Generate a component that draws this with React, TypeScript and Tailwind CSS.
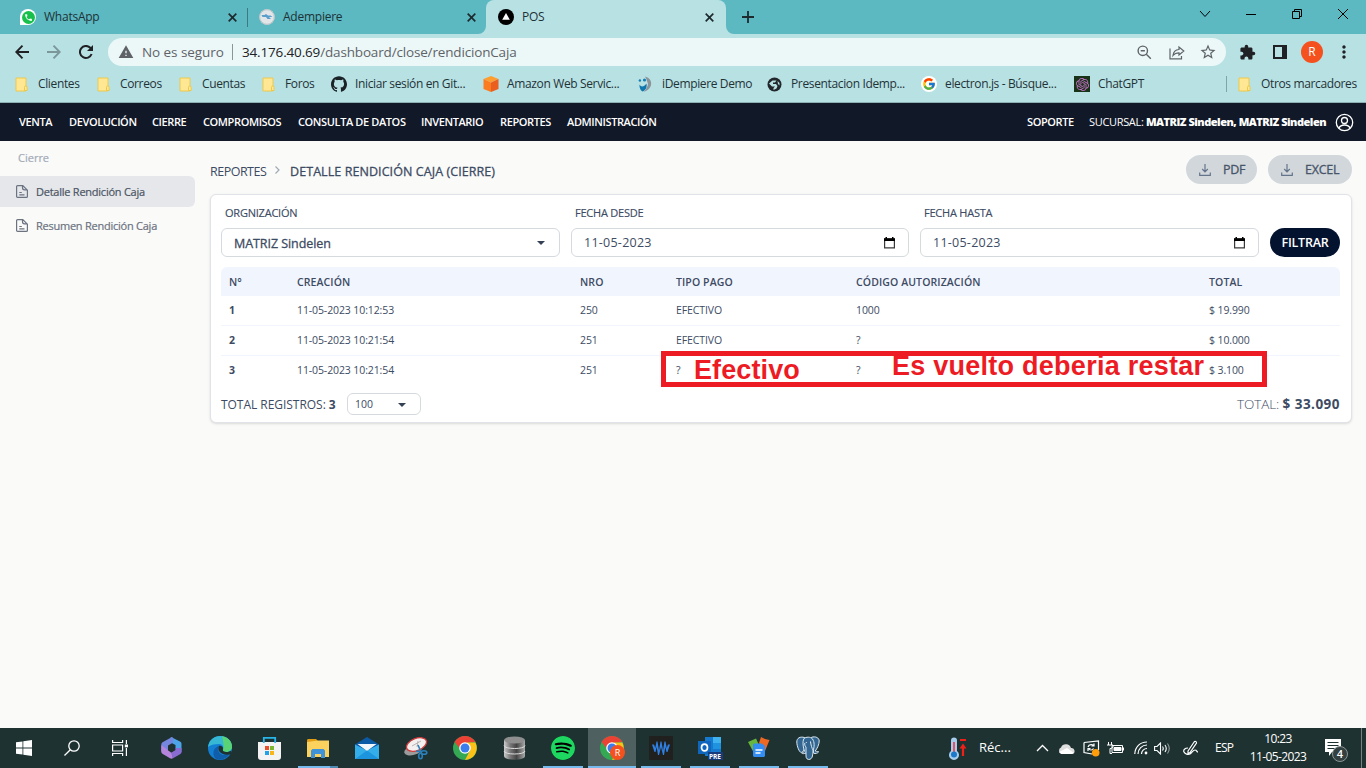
import type { ReactNode } from 'react';
import { FcGoogle } from 'react-icons/fc';
import { SiGithub, SiOpenai, SiSpotify } from 'react-icons/si';
import { MdWarning, MdStarBorder, MdExtension, MdMoreVert, MdPhone } from 'react-icons/md';

/* ---------- browser ---------- */

function Folder() {
  return (
    <svg className="ml-px" width="13" height="15" viewBox="0 0 13 15">
      <path d="M1 1h10v13H1z" fill="#ffe793" stroke="#ecc94b" />
      <path d="M9.500 13.500v-3.200a1 1 0 0 1 2.600 0v3.200z" fill="#ffe793" stroke="#ecc94b" />
    </svg>
  );
}

function BoxIcon() {
  return (
    <svg width="16" height="16" viewBox="0 0 16 16">
      <path d="M8 0l7.500 3L8 6.500.5 3z" fill="#ff9d2e" />
      <path d="M.5 3L8 6.500V16L.5 13z" fill="#fb7b21" />
      <path d="M15.500 3L8 6.500V16l7.500-3z" fill="#ea5f1d" />
    </svg>
  );
}

function DempiereIcon() {
  return (
    <svg width="14" height="16" viewBox="0 0 14 16">
      <path d="M7 .5c5 1 7.500 5.500 5.500 10C11.500 13 9 15 5.500 15.800 9 12.500 10.300 9.500 9.500 6.500 9 4.300 8 2.300 7 .5z" fill="#8b9499" />
      <path d="M9 6c1 3 0 6.500-3.500 9.800 2-3.500 3.200-6.500 3.500-9.800z" fill="#e8eef0" />
      <path d="M1.500 8.500c1.500 3 4.500 2.500 7-1 .8 4-.5 6.500-4 8-2-1-3.300-4-3-7z" fill="#1277ad" />
      <circle cx="6.500" cy="4" r="1.600" fill="#1680b4" />
      <circle cx="1.900" cy="4.500" r="1.200" fill="#1680b4" />
    </svg>
  );
}

function GlobeIcon() {
  return (
    <svg width="15" height="15" viewBox="0 0 15 15">
      <circle cx="7.500" cy="7.500" r="7" fill="#23272b" />
      <path d="M5.500 3.500h4L8 5.500H6V7h3l1.500 2-1 2.500-3 1.500V11L8 9.500H5L2 6.500z" fill="#b8e1e4" />
      <path d="M10.500 4l2 2v2.500L11 7z" fill="#b8e1e4" />
    </svg>
  );
}

function Tab({ icon, title, active, divider }: { icon: ReactNode; title: string; active?: boolean; divider?: boolean }) {
  return (
    <div className={`relative flex h-[34px] items-center pl-3 ${active ? 'w-60 rounded-t-lg bg-[#b8e1e4] pr-3' : 'w-[239px] pr-[10px]'}`}>
      {active && (
        <>
          <svg className="absolute -left-2 bottom-0" width="8" height="8"><path d="M8 0v8H0a8 8 0 0 0 8-8z" fill="#b8e1e4" /></svg>
          <svg className="absolute -right-2 bottom-0" width="8" height="8"><path d="M0 0v8h8a8 8 0 0 1-8-8z" fill="#b8e1e4" /></svg>
        </>
      )}
      <span className="flex w-6 shrink-0">{icon}</span>
      <span className="flex-1 text-[12px] tracking-[-0.02em] text-[#1d3236]">{title}</span>
      <svg width="9" height="9" viewBox="0 0 9 9" stroke="#1d2b2e" strokeWidth="1.700"><path d="M.7.7l7.600 7.600M8.300.7L.7 8.300" /></svg>
      {divider && <span className="absolute -right-px top-2 h-[19px] w-px bg-[#3c7a81]" />}
    </div>
  );
}

function Bookmark({ icon, label, width }: { icon: ReactNode; label: string; width: string }) {
  return (
    <div className={`flex shrink-0 items-center ${width}`}>
      <span className="flex w-6 shrink-0">{icon}</span>
      <span>{label}</span>
    </div>
  );
}

function Browser() {
  return (
    <header className="shrink-0">
      <div className="flex h-[34px] bg-[#5cb8c1]">
        <div className="flex w-[726px] pl-2">
          <Tab
            divider
            title="WhatsApp"
            icon={<span className="flex size-4 items-center justify-center rounded-full rounded-bl-sm bg-white"><span className="flex size-[13px] items-center justify-center rounded-full bg-[#17c04a]"><MdPhone className="size-[9px] text-white" /></span></span>}
          />
          <Tab
            title="Adempiere"
            icon={
              <svg width="16" height="16" viewBox="0 0 16 16">
                <circle cx="8" cy="8" r="7.700" fill="#e3e6e9" />
                <circle cx="8" cy="8" r="7.300" fill="none" stroke="#bcc3c7" />
                <path d="M2.500 6h3l1.500-1 2 1.500h2.500l2 1.500H10l2 2H8.500L7 8H3.500z" fill="#5a9fcb" />
              </svg>
            }
          />
          <Tab
            active
            title="POS"
            icon={<svg width="16" height="16" viewBox="0 0 16 16"><circle cx="8" cy="8" r="8" fill="#000" /><path d="M8 4l3.800 6.800H4.200z" fill="#fff" /></svg>}
          />
        </div>
        <div className="flex flex-1 items-center pl-4"><svg width="12" height="12" viewBox="0 0 12 12" stroke="#1d2b2e" strokeWidth="1.800"><path d="M6 0v12M0 6h12" /></svg></div>
        <div className="flex h-7 items-center text-black">
          <svg className="mr-[35px]" width="12" height="8" viewBox="0 0 12 8" fill="none" stroke="currentColor"><path d="M1 1l5 5.500L11 1" /></svg>
          <svg className="mr-9" width="10" height="10" viewBox="0 0 10 10" stroke="currentColor"><path d="M0 5.500h10" /></svg>
          <svg className="mr-9" width="10" height="10" viewBox="0 0 10 10" fill="none" stroke="currentColor"><path d="M.5 2.500h7v7h-7zM2.500 2.500v-2h7v7h-2" /></svg>
          <svg className="mr-[18px]" width="10" height="10" viewBox="0 0 10 10" stroke="currentColor"><path d="M0 0l10 10M10 0L0 10" /></svg>
        </div>
      </div>
      <div className="flex h-9 items-center bg-[#b8e1e4] text-[#202124]">
        <svg className="ml-[15px]" width="14" height="14" viewBox="0 0 14 14" fill="none" stroke="currentColor" strokeWidth="1.900"><path d="M14 7H1.500M7.500.7L1.300 7l6.200 6.300" /></svg>
        <svg className="ml-[18px]" width="14" height="14" viewBox="0 0 14 14" fill="none" stroke="#7b979a" strokeWidth="1.900"><path d="M0 7h12.500M6.500.7L12.700 7l-6.200 6.300" /></svg>
        <svg className="ml-[18px]" width="14" height="14" viewBox="0 0 14 14" fill="none" stroke="currentColor" strokeWidth="2"><path d="M12.600 9A6 6 0 1 1 11.300 2.800L13 4.500" /><path d="M14 0v6H8z" fill="currentColor" stroke="none" /></svg>
        <div className="ml-[15px] flex h-7 w-[1118px] items-center rounded-full bg-[#ecf8f8] pl-[10px] text-[13.5px] text-[#5f6368]">
          <MdWarning className="size-4" />
          <span className="ml-2 w-[90px] tracking-[-0.005em]">No es seguro</span>
          <span className="h-4 w-px bg-[#8b9496]" />
          <span className="ml-[9px] flex-1 tracking-[-0.012em]"><span className="text-[#202124]">34.176.40.69</span>/dashboard/close/rendicionCaja</span>
          <svg width="15" height="15" viewBox="0 0 15 15" fill="none" stroke="currentColor" strokeWidth="1.400"><circle cx="5.800" cy="5.800" r="4.700" /><path d="M9.300 9.300l4.500 4.500M3.700 5.800h4.200" /></svg>
          <svg className="ml-[17px]" width="16" height="15" viewBox="0 0 16 15" fill="none" stroke="currentColor" strokeWidth="1.200"><path d="M1 3.500v10.300h11.500V11M4 10.500c.5-4 2.500-5.800 6-6V2l4.800 4-4.800 4V7.800c-2.800 0-4.500.8-6 2.700z" /></svg>
          <MdStarBorder className="ml-[14px] mr-[9px] size-[18px]" />
        </div>
        <MdExtension className="ml-[13px] size-[17px]" />
        <span className="ml-[17px] h-[14px] w-[14px] border-2 border-r-[5px] border-[#202124]" />
        <span className="ml-[14px] flex size-[22px] items-center justify-center rounded-full bg-[#f4511e] text-[12px] text-white">R</span>
        <MdMoreVert className="ml-[11px] size-[20px]" />
      </div>
      <div className="flex h-8 items-center bg-[#b8e1e4] pb-1 pl-[14px] text-[12px] tracking-[-0.03em] text-[#1f3337]">
        <Bookmark width="w-[82px]" icon={<Folder />} label="Clientes" />
        <Bookmark width="w-[82px]" icon={<Folder />} label="Correos" />
        <Bookmark width="w-[83px]" icon={<Folder />} label="Cuentas" />
        <Bookmark width="w-[70px]" icon={<Folder />} label="Foros" />
        <Bookmark width="w-[152px]" icon={<SiGithub className="size-4 text-[#1b2225]" />} label="Iniciar sesión en Git..." />
        <Bookmark width="w-[155px]" icon={<BoxIcon />} label="Amazon Web Servic..." />
        <Bookmark width="w-[129px]" icon={<DempiereIcon />} label="iDempiere Demo" />
        <Bookmark width="w-[154px]" icon={<GlobeIcon />} label="Presentacion Idemp..." />
        <Bookmark width="w-[153px]" icon={<span className="flex size-4 items-center justify-center rounded-full bg-white"><FcGoogle className="size-[14px]" /></span>} label="electron.js - Búsque..." />
        <Bookmark width="w-[152px]" icon={<span className="flex size-4 items-center justify-center bg-[#193319]"><SiOpenai className="size-[13px] text-[#c56fc9]" /></span>} label="ChatGPT" />
        <span className="mr-[10px] h-4 w-px bg-[#7fa5a9]" />
        <Bookmark width="w-[120px]" icon={<Folder />} label="Otros marcadores" />
      </div>
      <div className="h-px bg-[#8fb0b3]" />
    </header>
  );
}

/* ---------- application ---------- */

const menu = [
  ['VENTA', 'w-[50px]'],
  ['DEVOLUCIÓN', 'w-[83px]'],
  ['CIERRE', 'w-[51px]'],
  ['COMPROMISOS', 'w-[95px]'],
  ['CONSULTA DE DATOS', 'w-[123px]'],
  ['INVENTARIO', 'w-[79px]'],
  ['REPORTES', 'w-[67px]'],
  ['ADMINISTRACIÓN', 'w-[100px]'],
];

function NavBar() {
  return (
    <nav className="flex h-[38px] shrink-0 items-center bg-[#111827] pl-[19px] text-[11px] font-semibold tracking-[-0.035em] text-white">
      {menu.map(([label, width]) => <span key={label} className={`shrink-0 ${width}`}>{label}</span>)}
      <span className="ml-auto w-[62px]">SOPORTE</span>
      <span className="w-[246px]"><span className="font-normal tracking-[-0.03em]">SUCURSAL:</span> <b className="tracking-[-0.045em]">MATRIZ Sindelen, MATRIZ Sindelen</b></span>
      <svg className="mr-3" width="19" height="19" viewBox="0 0 19 19" fill="none" stroke="#fff" strokeWidth="1.300">
        <circle cx="9.500" cy="9.500" r="8.200" />
        <circle cx="9.500" cy="7.500" r="3" />
        <path d="M4 15.300c.8-2.200 3-3.300 5.500-3.300s4.700 1.100 5.500 3.300" />
      </svg>
    </nav>
  );
}

function DocIcon() {
  return (
    <svg className="mr-[8px]" width="12" height="13" viewBox="0 0 12 13" fill="none" stroke="#6b7280" strokeWidth="1.200">
      <path d="M1.600.6h5.200l4.600 4.600v6.200a1 1 0 0 1-1 1H1.600a1 1 0 0 1-1-1V1.600a1 1 0 0 1 1-1zM6.500.8v2a2 2 0 0 0 2 2h2.700M3.300 7.500h2.500M3.300 9.800h5.200" />
    </svg>
  );
}

function SideBar() {
  return (
    <aside className="w-[195px] shrink-0 text-[11px] tracking-[-0.022em] [-webkit-text-stroke:0.2px]">
      <div className="flex h-[35px] items-center pl-[18px] tracking-normal text-[#a3abb8]">Cierre</div>
      <div className="flex h-[31px] items-center rounded-r-md bg-[#e5e7eb] pl-4 text-[#4b5563]"><DocIcon /><span className="pt-0.5">Detalle Rendición Caja</span></div>
      <div className="mt-[3px] flex h-[31px] items-center pl-4 text-[#6b7280]"><DocIcon /><span className="pt-0.5">Resumen Rendición Caja</span></div>
    </aside>
  );
}

function DownloadButton({ label, width }: { label: string; width: string }) {
  return (
    <button className={`flex h-[29px] items-center rounded-full bg-[#d2d7db] pl-[13px] text-[12.5px] tracking-[-0.02em] text-[#475569] [-webkit-text-stroke:0.3px] ${width}`}>
      <svg className="mr-3" width="12" height="12" viewBox="0 0 12 12" fill="none" stroke="#64748b" strokeWidth="1.200">
        <path d="M6 0v7.500M3.200 5L6 7.800 8.800 5M.7 8.500v2.800h10.600V8.500" />
      </svg>
      <span className="pt-0.5">{label}</span>
    </button>
  );
}

function Caret() {
  return <svg width="8" height="4" viewBox="0 0 8 4"><path d="M0 0h8L4 4z" fill="#334155" /></svg>;
}

function DateField({ label, width }: { label: string; width: string }) {
  return (
    <div className={width}>
      <div className="flex h-[18px] items-center pl-1 [-webkit-text-stroke:0.15px]">{label}</div>
      <div className="mt-[6px] flex h-[29px] items-center justify-between rounded-md border border-[#d5dade] pl-3 pr-[13px] text-[12.5px]">
        <span className="pt-px tracking-[0.02em]">11-05-2023</span>
        <svg width="11" height="12" viewBox="0 0 11 12">
          <path d="M.6 2h9.800v8.900H.6z" fill="none" stroke="#3a3a3a" strokeWidth="1.200" />
          <path d="M0 1.300h11V4H0zM1.500 0H3v2H1.500zM8 0h1.500v2H8z" fill="#000" />
        </svg>
      </div>
    </div>
  );
}

const rows = [
  ['1', '11-05-2023 10:12:53', '250', 'EFECTIVO', '1000', '$ 19.990'],
  ['2', '11-05-2023 10:21:54', '251', 'EFECTIVO', '?', '$ 10.000'],
  ['3', '11-05-2023 10:21:54', '251', '?', '?', '$ 3.100'],
];

const columns = 'grid grid-cols-[68px_283px_96px_180px_353px_1fr] items-center pl-2';

function Report() {
  return (
    <main className="relative flex-1 pl-[15px] pr-[14px] pt-[14px] text-[#3d4b63]">
      <div className="flex h-[29px] items-center text-[12.5px]">
        <span className="w-[65px] pt-[5px] tracking-[-0.04em]">REPORTES</span>
        <svg className="mr-[10px]" width="5" height="8" viewBox="0 0 5 8" fill="none" stroke="#a1a9b5" strokeWidth="1.200"><path d="M.5.5L4 4 .5 7.500" /></svg>
        <span className="flex-1 pt-[5px] tracking-[0.006em] [-webkit-text-stroke:0.3px]">DETALLE RENDICIÓN CAJA (CIERRE)</span>
        <DownloadButton label="PDF" width="w-[71px]" />
        <span className="w-[11px]" />
        <DownloadButton label="EXCEL" width="w-[84px]" />
      </div>

      <section className="mt-[10px] h-[229px] rounded-md border border-[#e0e3e7] bg-white pl-[10px] pr-[11px] pt-[9px] shadow-sm">
        <div className="flex gap-[11px] text-[11px] tracking-[-0.02em]">
          <div className="w-[339px]">
            <div className="flex h-[18px] items-center pl-1 [-webkit-text-stroke:0.15px]">ORGNIZACIÓN</div>
            <div className="mt-[6px] flex h-[29px] items-center justify-between rounded-md border border-[#d5dade] pl-3 pr-[14px] text-[12.5px]">
              <span className="pt-1 tracking-[-0.005em] [-webkit-text-stroke:0.3px]">MATRIZ Sindelen</span><Caret />
            </div>
          </div>
          <DateField label="FECHA DESDE" width="w-[338px]" />
          <DateField label="FECHA HASTA" width="w-[339px]" />
          <button className="mt-6 h-[29px] w-[70px] rounded-full bg-[#03122f] pt-0.5 text-[12.5px] font-semibold tracking-[-0.02em] text-white">FILTRAR</button>
        </div>

        <div className="mt-[10px] text-[10.5px]">
          <div className={`h-[29px] rounded-t-md bg-[#f1f5fe] pt-0.5 font-semibold tracking-[0.01em] ${columns}`}>
            {['N°', 'CREACIÓN', 'NRO', 'TIPO PAGO', 'CÓDIGO AUTORIZACIÓN', 'TOTAL'].map((h) => <span key={h}>{h}</span>)}
          </div>
          {rows.map((row, i) => (
            <div key={row[0]} className={`h-[30px] tracking-[-0.01em] ${i < 2 ? 'border-b border-[#f1f5fe]' : ''} ${columns}`}>
              {row.map((cell, c) => <span key={c} className={c === 0 ? 'font-bold' : ''}>{cell}</span>)}
            </div>
          ))}
        </div>

        <div className="mt-[6px] flex h-[23px] items-center text-[12px]">
          <span className="w-[126px] pt-0.5 tracking-[-0.003em]">TOTAL REGISTROS: <b>3</b></span>
          <div className="flex h-[22px] w-[74px] items-center justify-between rounded-md border border-[#d5dade] pl-[7px] pr-[14px] pt-[3px] text-[10.5px]"><span>100</span><Caret /></div>
          <span className="ml-auto pt-0.5 text-[13.5px]"><span className="font-light tracking-[-0.01em]">TOTAL:</span> <b className="tracking-[0.035em]">$ 33.090</b></span>
        </div>
      </section>

      <div className="absolute left-[466px] top-[210px] h-9 w-[606px] border-[5px] border-[#ed1c24]" />
      <div className="absolute left-[499px] top-[214px] font-['Liberation_Sans',sans-serif] text-[27px] font-bold leading-[30px] tracking-[0.004em] text-[#ed1c24]">Efectivo</div>
      <div className="absolute left-[697px] top-[210px] whitespace-nowrap font-['Liberation_Sans',sans-serif] text-[27px] font-bold leading-[30px] tracking-[0.0095em] text-[#ed1c24]">Es vuelto deberia restar</div>
    </main>
  );
}

/* ---------- taskbar ---------- */

function Chrome() {
  return (
    <svg width="24" height="24" viewBox="0 0 24 24">
      <circle cx="12" cy="12" r="12" fill="#34a853" />
      <path d="M1.600 6A12 12 0 0 1 22.400 6L12 7 8 14z" fill="#ea4335" />
      <path d="M22.400 6.500A12 12 0 0 1 12 24l5-9.500L14 6.500z" fill="#fbc116" />
      <circle cx="12" cy="12" r="5.800" fill="#fff" />
      <circle cx="12" cy="12" r="4.500" fill="#3b7ded" />
    </svg>
  );
}

function Office() {
  return (
    <svg width="21" height="22" viewBox="0 0 21 22">
      <path d="M10 0l9 4.500c1 .6 1.500 1.500 1.500 2.500v8l-6-3.500V8L8 4.500z" fill="#4ca5e8" />
      <path d="M11 0L2 5C.8 5.700.3 6.500.3 7.500v7L7 14V8.500l4-2.300c2-1 2-5 0-6.200z" fill="#7486dd" />
      <path d="M.3 8v6.500c0 1.200.5 1.900 1.500 2.500L9 21.300c1 .6 2 .4 3 0l-1-5-4-3z" fill="#b585de" />
      <path d="M20.500 11v4c0 1-.5 1.600-1.500 2.200l-7 4.100-2-5.500 3-1.800c1-.6 1.500-1 1.500-2V11z" fill="#8a6bd2" />
      <path d="M10.500 7.800l3.300 1.900v3.400l-3.300 1.900-3.300-1.900V9.700z" fill="#1f3232" />
    </svg>
  );
}

function Edge() {
  return (
    <svg width="24" height="24" viewBox="0 0 24 24">
      <circle cx="12" cy="12" r="12" fill="#137fd3" />
      <path d="M0 11C1 4 6 0 12 0c7 0 12 5 12 10.500 0 4-3 5.500-6 5.500-2 0-3.500-.8-3-2 1.500-3-.8-6-4-6-5 0-9 1-11 3z" fill="#36b8d5" />
      <path d="M14 .2C20 1 24 5.500 24 10.500c0 4-3 5.500-6 5.500-2 0-3.500-.8-3-2 1.500-4 0-9-1-13.800z" fill="#58d477" />
      <path d="M8 23C3 18 6 11 11 10c-2 4 0 9 5 9 2.500 0 4.500-.5 6-1.500C19 22 14 25 8 23z" fill="#105da9" />
      <path d="M11 10c2-.6 4.600 1 4 3-.7 1.500 0 2.700 3 3 2 .2 3.700-.5 4.800-1.200L24 18c-6 2.500-16-1-13-8z" fill="#1f3232" />
    </svg>
  );
}

function Store() {
  return (
    <svg width="23" height="23" viewBox="0 0 23 23">
      <path d="M0 5h23v15a3 3 0 0 1-3 3H3a3 3 0 0 1-3-3z" fill="#f3f3f3" />
      <path d="M5.800 6V.9h11.400V6" fill="none" stroke="#28b5e8" strokeWidth="1.800" />
      <path d="M7 9h4v4H7z" fill="#e6502b" /><path d="M12 9h4v4h-4z" fill="#7cb82f" /><path d="M7 14h4v4H7z" fill="#22a2e9" /><path d="M12 14h4v4h-4z" fill="#f8b617" />
    </svg>
  );
}

function Explorer() {
  return (
    <svg width="22" height="19" viewBox="0 0 22 19">
      <path d="M0 1.500C0 .5.500 0 1.500 0H9l1.500 1.500V4H0z" fill="#e29d12" />
      <path d="M0 3l11-1.500h11V18H0z" fill="#fbd25d" />
      <path d="M4 19v-7.500L5.500 10h11l1.500 1.500V19h-4v-4H8v4z" fill="#3f93d9" />
    </svg>
  );
}

function Mail() {
  return (
    <svg width="24" height="22" viewBox="0 0 24 22">
      <path d="M0 7.500L12 0l12 7.500V12H0z" fill="#0a5aa6" />
      <path d="M0 7.500l12 6 12-6V22H0z" fill="#34aeeb" />
      <path d="M2.500 7h19L12 14z" fill="#f1f6fa" />
      <path d="M0 22l12-8.500L24 22z" fill="#1c94de" />
    </svg>
  );
}

function Snip() {
  return (
    <svg width="24" height="23" viewBox="0 0 24 23">
      <ellipse cx="9" cy="13.500" rx="9" ry="4.500" fill="#9c9c9c" transform="rotate(-15 9 13.500)" />
      <ellipse cx="12.500" cy="7.500" rx="10.500" ry="6" fill="#f4f0f0" stroke="#d23b3b" strokeWidth="1.300" transform="rotate(-22 12.500 7.500)" />
      <path d="M8 9l9-5M13 10l1-6" stroke="#b9b2b2" />
      <g fill="none" stroke="#2a80bb" strokeWidth="1.600"><path d="M14 8l3 7M12 14l6 1" /><ellipse cx="20" cy="15.500" rx="2.800" ry="1.800" /><ellipse cx="16.500" cy="19" rx="1.800" ry="2.800" /></g>
    </svg>
  );
}

function Database() {
  return (
    <svg width="23" height="24" viewBox="0 0 23 24">
      <defs><linearGradient id="steel"><stop offset="0" stopColor="#ccc" /><stop offset=".3" stopColor="#777" /><stop offset=".6" stopColor="#444" /><stop offset="1" stopColor="#aaa" /></linearGradient></defs>
      <path d="M1 4v16c0 5 21 5 21 0V4z" fill="url(#steel)" />
      <ellipse cx="11.500" cy="4" rx="10.500" ry="3.500" fill="#8f8f8f" />
      <path d="M1 9.500c0 4 21 4 21 0M1 15c0 4 21 4 21 0" fill="none" stroke="#ddd" strokeWidth="1" />
    </svg>
  );
}

function Wave() {
  return (
    <svg width="24" height="24" viewBox="0 0 24 24">
      <path d="M0 0h24v24H0z" fill="#20201f" />
      <path d="M3 8.500h2l1.300 3.500 1.200-6.500h1l1.500 9 1.500-9h1l1.500 9 1.500-9h1l1.200 6.500L19 8.500h2L18.500 16h-1L16.300 11 15 19h-1l-2-8-2 8H9l-1.300-8L6.500 16h-1z" fill="#2f80e4" />
    </svg>
  );
}

function Outlook() {
  return (
    <svg width="25" height="24" viewBox="0 0 25 24">
      <path d="M7 1h16v19H7z" fill="#1479cf" /><path d="M15 1h8v6h-8z" fill="#3fb1ee" /><path d="M15 7h8v6h-8z" fill="#1f93e0" />
      <path d="M0 5h13v13H0z" fill="#0f66bd" />
      <ellipse cx="6.500" cy="11.500" rx="3" ry="3.400" fill="none" stroke="#fff" strokeWidth="1.700" />
      <path d="M10 16h15v8H10z" fill="#173a78" />
      <text x="11" y="22.500" fill="#fff" fontSize="6.500" fontWeight="700">PRE</text>
    </svg>
  );
}

function Documents() {
  return (
    <svg width="22" height="22" viewBox="0 0 22 22">
      <path d="M0 5l8-3.500L11 8l-5 8z" fill="#66b63d" /><path d="M13 0l4 2 4.500 1-4.500 11-6-8z" fill="#ee6823" />
      <path d="M5 7.500l1-1h8l3 2.500v10l-1 1H6l-1-1z" fill="#338df2" /><path d="M7.500 13h7M7.500 16h5" stroke="#fff" strokeWidth="1.400" />
    </svg>
  );
}

function Elephant() {
  return (
    <svg width="24" height="24" viewBox="0 0 24 24" fill="#336791" stroke="#dce8f0" strokeWidth="1" strokeLinejoin="round">
      <path d="M8.500 1.500C4 .3.800 2 .8 6c0 4 2.500 10.500 4.500 10.500 1 0 1.800-1.500 2.700-2.700z" />
      <path d="M15.500 1.300c4-1.300 7.700.5 7.700 3.700 0 3.500-2 7.500-4 10 2 .8 3 .3 3.500.8-1 1.500-3.500 2-5 1.500z" />
      <path d="M8 2.500c2-1.700 6.500-2 8.500.5 2.200 3 2 8 .5 12-.5 3.500 0 7-3 8.300-2.500.7-4-.8-4-3.300v-3c-1.500.8-3.500.8-4.200.2 1-.9 2-.7 2.700-2.200C7.500 12.500 6 6 8 2.500z" />
      <path d="M10 17V11c-1.200-1-1.500-2.500-1.200-4M14.500 5.500c.5 3.500 1 6 3 9.500" fill="none" />
      <path d="M9.800 6.500h1M14 6.300h1" />
    </svg>
  );
}

const apps: { name: string; icon: ReactNode; open?: boolean; active?: boolean }[] = [
  { name: 'office', icon: <Office /> },
  { name: 'edge', icon: <Edge /> },
  { name: 'store', icon: <Store /> },
  { name: 'explorer', icon: <Explorer />, open: true },
  { name: 'mail', icon: <Mail /> },
  { name: 'snip', icon: <Snip /> },
  { name: 'chrome', icon: <Chrome /> },
  { name: 'database', icon: <Database /> },
  { name: 'spotify', icon: <span className="rounded-full bg-black"><SiSpotify className="size-6 text-[#1ed760]" /></span>, open: true },
  {
    name: 'chrome-profile',
    active: true,
    icon: (
      <span className="relative">
        <Chrome />
        <span className="absolute left-[10px] top-[9px] flex size-[15px] items-center justify-center rounded-full bg-[#f4511e] text-[9px] text-white">R</span>
      </span>
    ),
  },
  { name: 'wave', icon: <Wave />, open: true },
  { name: 'outlook', icon: <Outlook />, open: true },
  { name: 'documents', icon: <Documents />, open: true },
  { name: 'postgres', icon: <Elephant />, open: true },
];

function Taskbar() {
  return (
    <footer className="flex h-10 shrink-0 items-center bg-[#1f3232] text-white">
      <div className="flex w-[147px]">
        <span className="flex w-12 justify-center">
          <svg width="16" height="16" viewBox="0 0 16 16" fill="#fff"><path d="M0 2.300L6.500 1.400V7.600H0zM7.300 1.300L16 0v7.600H7.300zM0 8.400h6.500v6.200L0 13.700zM7.300 8.400H16V16l-8.700-1.300z" /></svg>
        </span>
        <span className="flex w-12 justify-center">
          <svg width="16" height="16" viewBox="0 0 16 16" fill="none" stroke="#fff" strokeWidth="1.300"><circle cx="10" cy="6" r="5.200" /><path d="M6.300 9.700L.5 15.500" /></svg>
        </span>
        <span className="flex w-12 justify-center">
          <svg width="16" height="16" viewBox="0 0 16 16" fill="none" stroke="#fff" strokeWidth="1.200"><path d="M.6 0v2.500h10V0M.6 5h10v6H.6zM.6 16v-2.500h10V16M14.400 0v4M14.400 8v8" /><path d="M12.800 4.500H16v2.800h-3.200z" fill="#fff" stroke="none" /></svg>
        </span>
      </div>
      {apps.map((app) => (
        <div key={app.name} className="flex w-[49px] shrink-0 justify-start">
          <div className={`relative flex h-10 w-12 items-center justify-center ${app.active ? 'bg-[#4e6060]' : ''}`}>
            {app.icon}
            {app.open && <span className="absolute bottom-0 left-1 h-0.5 w-10 bg-[#76b9ed]" />}
            {app.active && <span className="absolute bottom-0 left-0 h-0.5 w-12 bg-[#76b9ed]" />}
            {app.name === 'explorer' && <span className="absolute bottom-0 left-9 h-0.5 w-2 bg-[#4f88b0]" />}
          </div>
        </div>
      ))}
      <div className="ml-auto flex items-center text-[12px]">
        <svg width="18" height="23" viewBox="0 0 18 23">
          <path d="M2 3.500a3 3 0 0 1 6 0V14a5 5 0 1 1-6 0z" fill="#a7cdee" />
          <path d="M5 5v12" stroke="#e85364" strokeWidth="2" /><circle cx="5" cy="17.500" r="3" fill="#1d78c9" />
          <path d="M11 3h6M14 19V9" fill="none" stroke="#ef2018" strokeWidth="2.200" /><path d="M10.500 11.500L14 6.500l3.500 5z" fill="#ef2018" />
        </svg>
        <span className="ml-3 w-[57px] text-[13px]">Réc...</span>
        <svg width="13" height="8" viewBox="0 0 13 8" fill="none" stroke="#fff" strokeWidth="1.300"><path d="M1 7l5.500-5.500L12 7" /></svg>
        <svg className="ml-[9px]" width="17" height="11" viewBox="0 0 17 11"><path d="M3.500 11a3.500 3.500 0 0 1-.5-6.500A5.300 5.300 0 0 1 13 5a3 3 0 0 1 1 6z" fill="#dedede" /><path d="M1 9l8-4 7 5-2 1H3.500z" fill="#fff" /></svg>
        <svg className="ml-2" width="17" height="17" viewBox="0 0 17 17" fill="none" stroke="#fff" strokeWidth="1.200">
          <path d="M1 2.500L15.500 1v9M1 2.500v10L9 14M5 7c1-3 5-3 6-1M11 3.500V6H8.500M10.500 8.500c-1 2-4 2-5 0M5 11V8.500h2.500" /><circle cx="12.700" cy="12.700" r="3.800" fill="#ff9d0a" stroke="none" />
        </svg>
        <svg className="ml-[7px]" width="17" height="14" viewBox="0 0 17 14" fill="none" stroke="#fff"><path d="M5 4.500h10.500v7H5zM16.500 6.500v3M1.500 1v3M4.500 1v3M0 4h6v2L4 7.500H3v5h2" /><path d="M7 6.500h7v3H7z" fill="#fff" /></svg>
        <svg className="ml-[10px]" width="14" height="14" viewBox="0 0 14 14" fill="none" stroke="#fff" strokeWidth="1.200"><path d="M.8 13C1 6 6 1 13 1M4 13c0-5 4-9 9-9M7.500 13c0-3 2.500-5.500 5.500-5.500" /><circle cx="12" cy="12" r="1.400" fill="#fff" stroke="none" /></svg>
        <svg className="ml-[6px]" width="17" height="13" viewBox="0 0 17 13" fill="none" stroke="#fff" strokeWidth="1.100"><path d="M.6 4.500H3L6.500 1v11L3 8.500H.6zM8.500 4.500q1.500 2 0 4M11 3q2.500 3.500 0 7" /><path d="M13.500 1.500q3.500 5 0 10" opacity=".5" /></svg>
        <svg className="ml-[12px]" width="16" height="16" viewBox="0 0 16 16" fill="none" stroke="#fff" strokeWidth="1.200"><path d="M5 11L11.500 1.500q2-.5 2 1.500L7 12.500l-2 1zM5 8C2 8 0 10 1 12s4 3 6 2 3-4 5-4 1.500 2 3 2" /></svg>
        <span className="ml-4 w-[26px] text-[12px] tracking-[-0.06em]">ESP</span>
        <div className="w-[74px] text-center text-[12px] leading-[18px] tracking-[-0.05em]"><div>10:23</div><div>11-05-2023</div></div>
        <span className="relative ml-[10px] mr-[18px] block h-[18px] w-[18px]">
          <svg width="18" height="18" viewBox="0 0 18 18"><path d="M0 0h16v13H7l-3 4v-4H0z" fill="#fff" /><path d="M2.500 3.500h11M2.500 6.500h11M2.500 9.500h7" stroke="#1f3232" /></svg>
          <span className="absolute left-[7px] top-[7px] flex size-4 items-center justify-center rounded-full border border-[#8b9595] bg-[#34403f] text-[11px] font-semibold">4</span>
        </span>
        <span className="mr-1 h-10 w-px bg-[#75817f]" />
      </div>
    </footer>
  );
}

export default function App() {
  return (
    <div className="flex h-[768px] w-[1366px] flex-col overflow-hidden whitespace-nowrap bg-[#fafaf9] font-['Open_Sans',sans-serif]">
      <Browser />
      <NavBar />
      <div className="flex flex-1">
        <SideBar />
        <Report />
      </div>
      <Taskbar />
    </div>
  );
}
